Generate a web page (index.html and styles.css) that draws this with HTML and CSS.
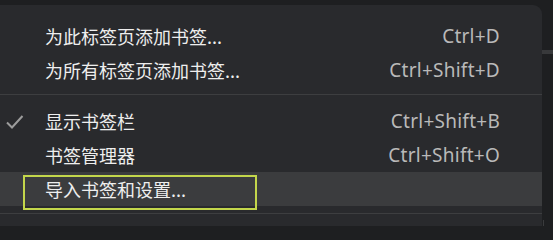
FILE: index.html
```html
<!DOCTYPE html>
<html lang="zh-CN">
<head>
<meta charset="utf-8">
<link rel="stylesheet" href="styles.css">
</head>
<body>
<div class="screen">
  <div class="menu">
    <div class="item"><span class="gutter"></span><span class="label">为此标签页添加书签...</span><span class="key">Ctrl+D</span></div>
    <div class="item"><span class="gutter"></span><span class="label">为所有标签页添加书签...</span><span class="key">Ctrl+Shift+D</span></div>
    <div class="sep"></div>
    <div class="item"><span class="gutter"><svg class="check" width="18" height="16" viewBox="0 0 18 16"><path d="M1 8.5 L6 13.5 L16.5 2" fill="none" stroke="#9c9c9c" stroke-width="2"/></svg></span><span class="label">显示书签栏</span><span class="key">Ctrl+Shift+B</span></div>
    <div class="item"><span class="gutter"></span><span class="label">书签管理器</span><span class="key">Ctrl+Shift+O</span></div>
    <div class="item hover"><span class="gutter"></span><span class="label">导入书签和设置...</span><span class="key"></span><span class="focus-box"></span></div>
    <div class="sep"></div>
  </div>
  <div class="side">
    <div class="side-band"></div>
    <div class="side-line"></div>
  </div>
</div>
</body>
</html>
```

FILE: styles.css
```css
html, body {
  margin: 0;
  padding: 0;
  background: #1e1f21;
  width: 553px;
  height: 226px;
  overflow: hidden;
}

.screen {
  display: flex;
  padding-top: 5px;
  height: 221px;
}

.menu {
  width: 542px;
  background: #292a2d;
  border-top-right-radius: 9px;
  padding-top: 14px;
  box-sizing: border-box;
}

.item {
  position: relative;
  display: grid;
  grid-template-columns: 45px 1fr auto;
  align-items: center;
  height: 34px;
  padding-right: 42px;
}

.item.hover {
  background: #3b3c3e;
}

.gutter {
  display: flex;
  align-items: center;
  padding-left: 6px;
  height: 100%;
}

.check {
  display: block;
  margin-top: 1px;
}

.label {
  font-family: "Noto Sans CJK SC", "Noto Sans", sans-serif;
  font-size: 18px;
  color: #eeeeee;
  line-height: 34px;
  white-space: nowrap;
}

.key {
  font-family: "Noto Sans", "Noto Sans CJK SC", sans-serif;
  font-size: 19px;
  letter-spacing: 0.25px;
  color: #b9b9b9;
  line-height: 34px;
  white-space: nowrap;
}

.focus-box {
  position: absolute;
  left: 23px;
  top: 3px;
  width: 234px;
  height: 35px;
  box-sizing: border-box;
  border: 2px solid #c3d64b;
  z-index: 2;
}

.sep {
  height: 1px;
  background: #3d3e40;
  margin: 7px 0 9px;
}

.side {
  flex: 1;
  position: relative;
}

.side-band {
  margin-top: 45px;
  height: 4px;
  background: #38393b;
}

.side-line {
  position: absolute;
  left: 1px;
  top: 215px;
  width: 1px;
  height: 10px;
  background: #3a3b3d;
}
```
